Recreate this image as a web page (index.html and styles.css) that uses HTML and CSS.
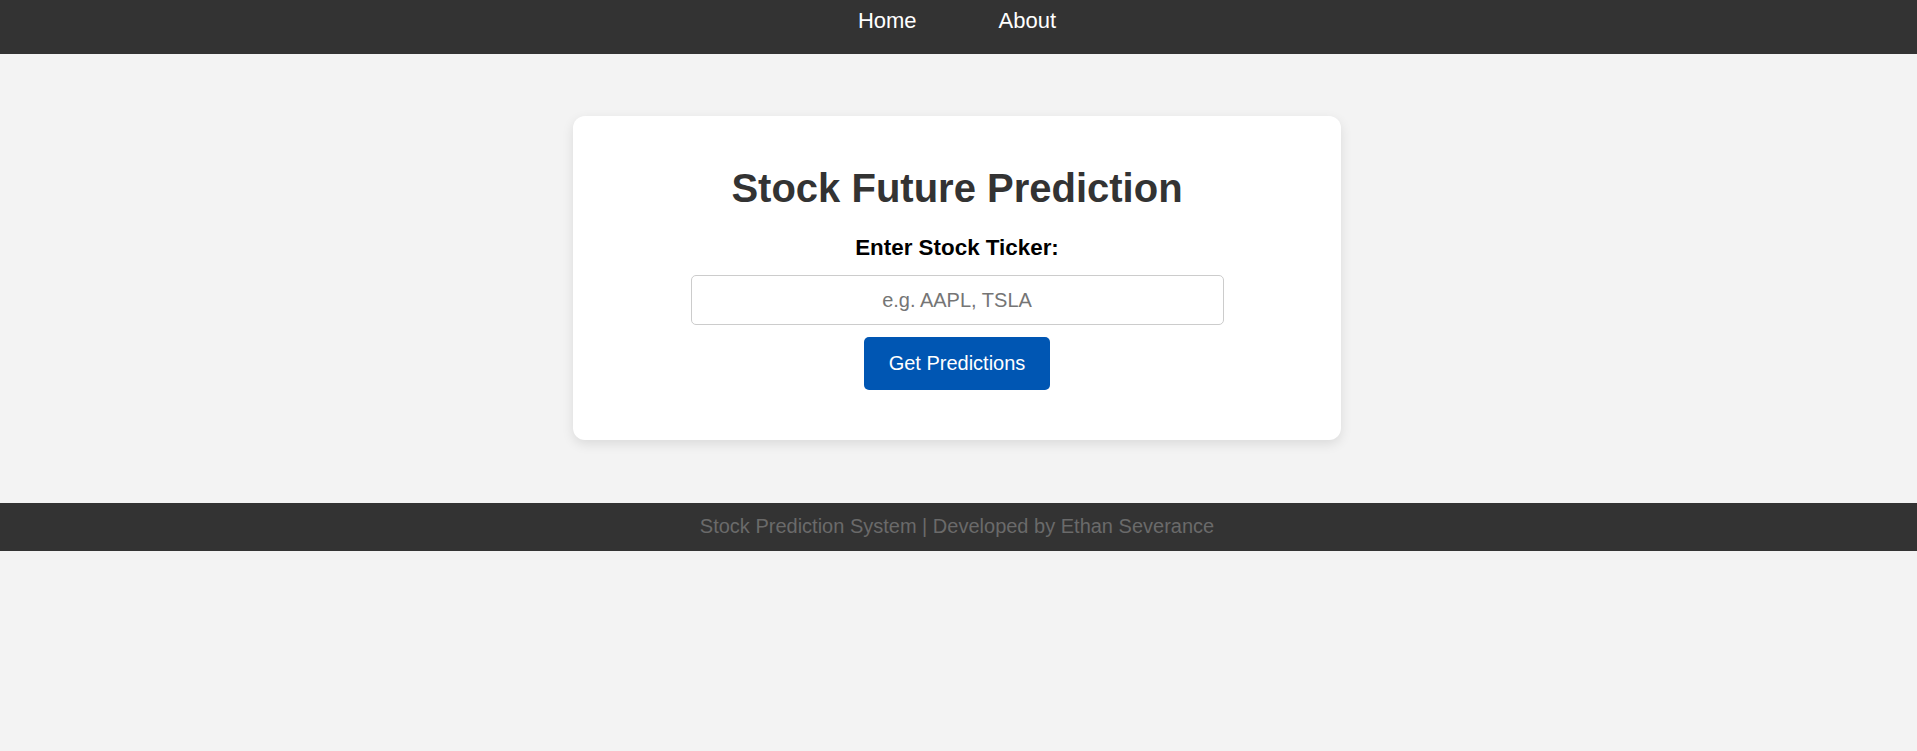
FILE: index.html
```html
<!DOCTYPE html>
<html lang="en">
<head>
<meta charset="utf-8">
<title>Stock Future Prediction</title>
<link rel="stylesheet" href="styles.css">
</head>
<body>
<nav class="topnav">
  <a class="nav-link" href="#">Home</a>
  <a class="nav-link" href="#">About</a>
</nav>
<main class="main">
  <section class="card">
    <h1 class="title">Stock Future Prediction</h1>
    <form class="form">
      <label class="label" for="ticker">Enter Stock Ticker:</label>
      <input class="input" id="ticker" type="text" placeholder="e.g. AAPL, TSLA">
      <button class="btn" type="button">Get Predictions</button>
    </form>
  </section>
</main>
<footer class="footer">Stock Prediction System | Developed by Ethan Severance</footer>
</body>
</html>
```

FILE: styles.css
```css
html, body {
  margin: 0;
  padding: 0;
  background: #f3f3f3;
  font-family: "Liberation Sans", Arial, sans-serif;
}

.topnav {
  height: 54px;
  box-sizing: border-box;
  padding: 8px 3px 0 0;
  background: #333333;
  display: flex;
  justify-content: center;
  gap: 82px;
}

.nav-link {
  color: #ffffff;
  text-decoration: none;
  font-size: 22px;
  line-height: 25px;
  height: 25px;
}

.main {
  padding: 62px 3px 63px 0;
  display: flex;
  justify-content: center;
}

.card {
  width: 768px;
  box-sizing: border-box;
  background: #ffffff;
  border-radius: 12px;
  box-shadow: 0 4px 12px rgba(0, 0, 0, 0.1);
  padding: 49px 0 50px;
  text-align: center;
}

.title {
  margin: 0;
  font-size: 40px;
  line-height: 46px;
  font-weight: bold;
  color: #333333;
}

.form {
  display: flex;
  flex-direction: column;
  align-items: center;
  margin-top: 24px;
}

.label {
  font-size: 22.4px;
  line-height: 25px;
  font-weight: bold;
  color: #000000;
}

.input {
  margin-top: 15px;
  width: 533px;
  height: 50px;
  box-sizing: border-box;
  border: 1px solid #cccccc;
  border-radius: 5px;
  font-family: "Liberation Sans", Arial, sans-serif;
  font-size: 20px;
  text-align: center;
  color: #333333;
  outline: none;
}

.input::placeholder {
  color: #757575;
}

.btn {
  margin-top: 12px;
  width: 186px;
  height: 53px;
  border: none;
  border-radius: 5px;
  background: #0056b3;
  color: #ffffff;
  font-family: "Liberation Sans", Arial, sans-serif;
  font-size: 20px;
  cursor: pointer;
}

.footer {
  height: 48px;
  box-sizing: border-box;
  background: #333333;
  color: #6a6a6a;
  font-size: 20px;
  line-height: 23px;
  padding: 12px 3px 0 0;
  text-align: center;
}
```
